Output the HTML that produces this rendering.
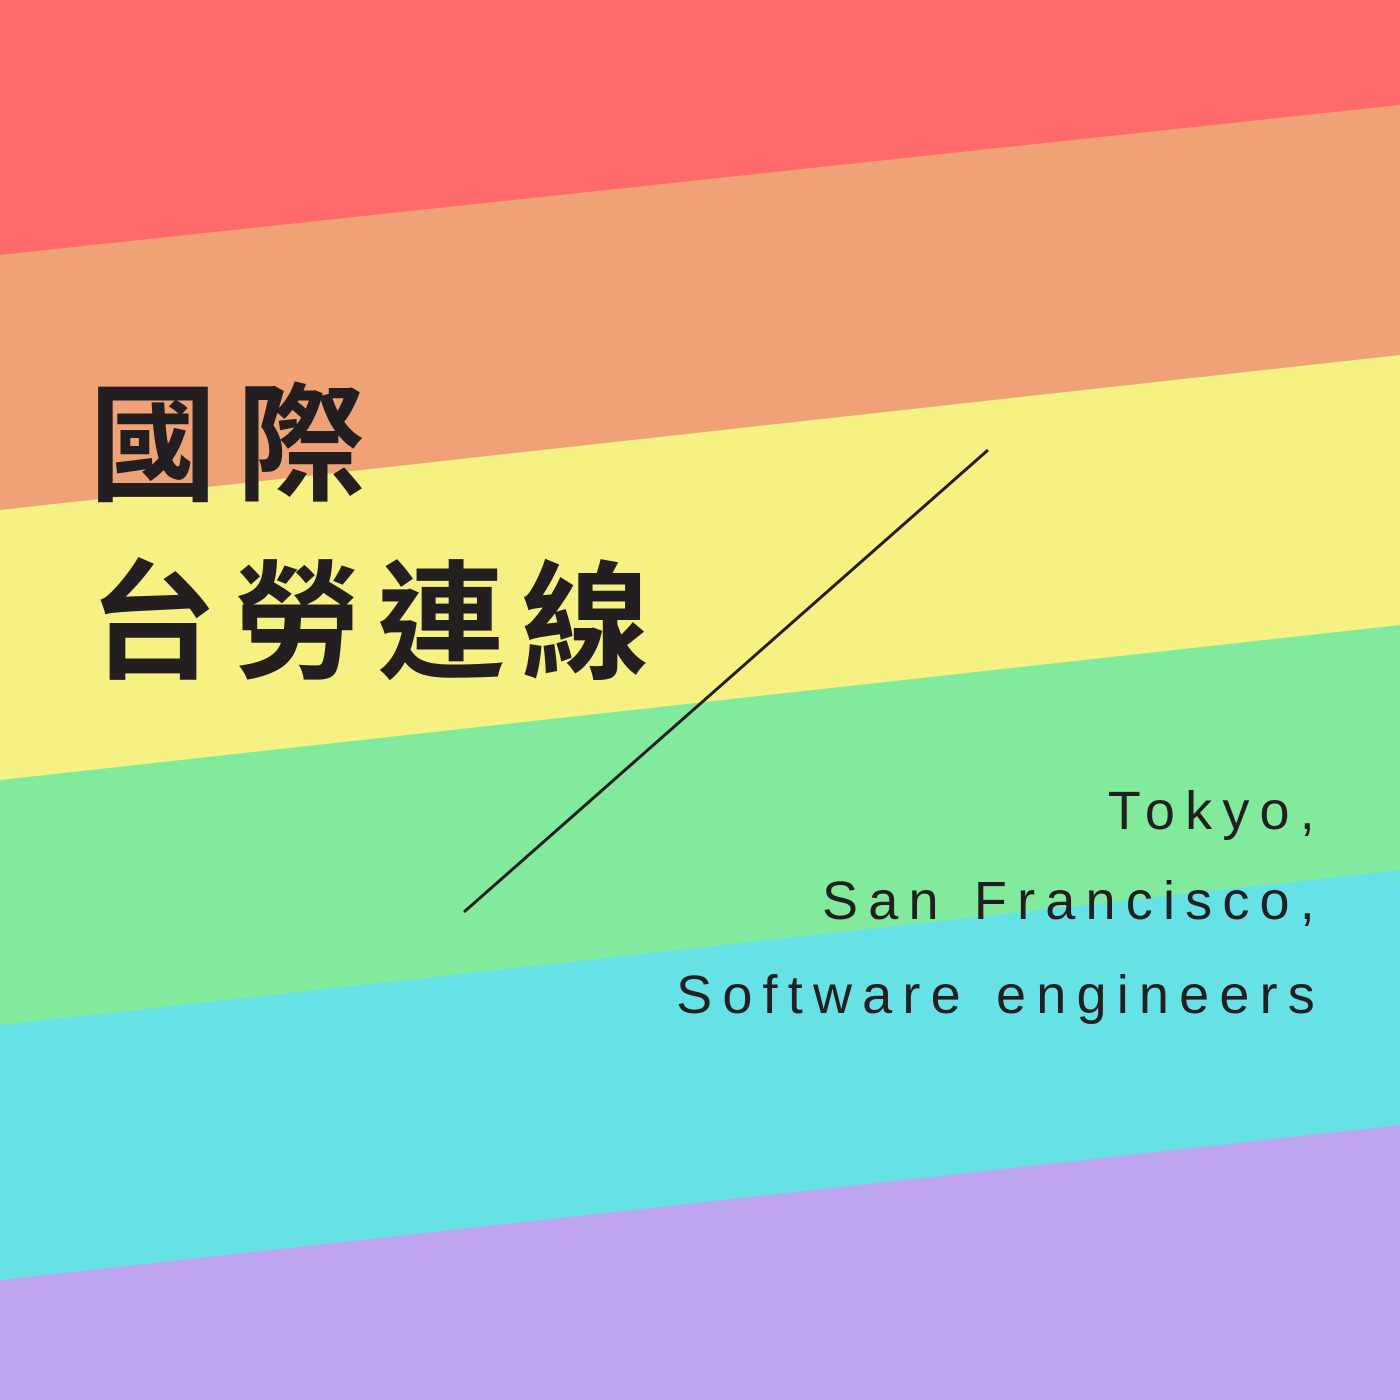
<!DOCTYPE html>
<html><head><meta charset="utf-8"><style>
html,body{margin:0;padding:0;width:1400px;height:1400px;overflow:hidden}
.zh{position:absolute;left:89px;font-family:"Liberation Sans","Noto Sans CJK TC",sans-serif;font-weight:700;font-size:128px;color:#231f20;line-height:1;white-space:nowrap}
.en{position:absolute;right:75px;font-family:"Liberation Sans",sans-serif;font-size:54px;color:#231f20;letter-spacing:10.2px;line-height:1;white-space:nowrap;font-weight:400}
</style></head><body>
<svg width="1400" height="1400" style="position:absolute;left:0;top:0">
<rect width="1400" height="1400" fill="#bea5f2"/>
<polygon points="0,0 1400,0 1400,1125 0,1280" fill="#66e2e6"/>
<polygon points="0,0 1400,0 1400,870 0,1025" fill="#82ea9c"/>
<polygon points="0,0 1400,0 1400,625 0,780" fill="#f5f283"/>
<polygon points="0,0 1400,0 1400,355 0,510" fill="#eea276"/>
<polygon points="0,0 1400,0 1400,105 0,255" fill="#ff6b6b"/>
<line x1="988" y1="450" x2="464" y2="912" stroke="#231f20" stroke-width="3"/>
</svg>
<div class="zh" style="top:383px;letter-spacing:20px">國際</div>
<div class="zh" style="top:561px;letter-spacing:16px">台勞連線</div>
<div class="en" style="top:784px">Tokyo,</div>
<div class="en" style="top:874px">San Francisco,</div>
<div class="en" style="top:968px">Software engineers</div>
</body></html>
